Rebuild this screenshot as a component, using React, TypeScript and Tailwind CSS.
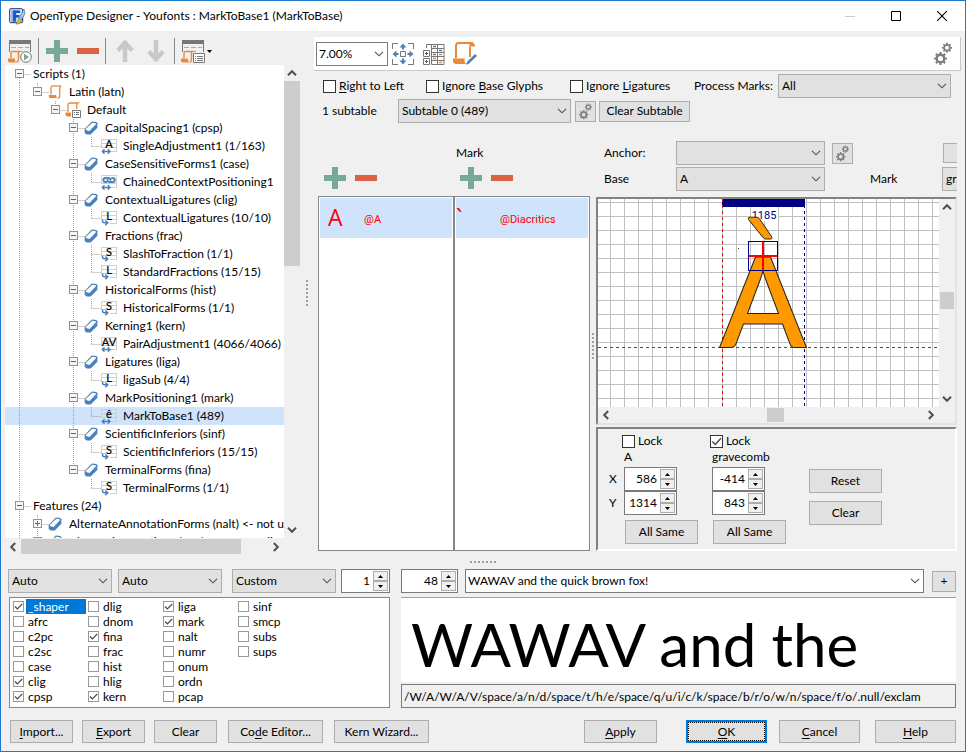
import type { ReactNode } from "react"
import clsx from "clsx"

type Lookup = "A" | "L" | "S" | "AV" | "ê" | "chain"
type IconName = "scroll" | "language" | "tag" | Lookup

interface TreeRow {
    text: string
    level: number
    icon?: IconName
    box?: "minus" | "plus"
    // columns whose dotted line runs through the whole row
    through: number[]
    last?: boolean
    selected?: boolean
}

const rows: TreeRow[] = [
    { text: "Scripts (1)", level: 0, box: "minus", through: [] },
    { text: "Latin (latn)", level: 1, box: "minus", icon: "scroll", through: [0], last: true },
    { text: "Default", level: 2, box: "minus", icon: "language", through: [0], last: true },
    { text: "CapitalSpacing1 (cpsp)", level: 3, box: "minus", icon: "tag", through: [0] },
    { text: "SingleAdjustment1 (1/163)", level: 4, icon: "A", through: [0, 3], last: true },
    { text: "CaseSensitiveForms1 (case)", level: 3, box: "minus", icon: "tag", through: [0] },
    { text: "ChainedContextPositioning1", level: 4, icon: "chain", through: [0, 3], last: true },
    { text: "ContextualLigatures (clig)", level: 3, box: "minus", icon: "tag", through: [0] },
    { text: "ContextualLigatures (10/10)", level: 4, icon: "L", through: [0, 3], last: true },
    { text: "Fractions (frac)", level: 3, box: "minus", icon: "tag", through: [0] },
    { text: "SlashToFraction (1/1)", level: 4, icon: "S", through: [0, 3] },
    { text: "StandardFractions (15/15)", level: 4, icon: "L", through: [0, 3], last: true },
    { text: "HistoricalForms (hist)", level: 3, box: "minus", icon: "tag", through: [0] },
    { text: "HistoricalForms (1/1)", level: 4, icon: "S", through: [0, 3], last: true },
    { text: "Kerning1 (kern)", level: 3, box: "minus", icon: "tag", through: [0] },
    { text: "PairAdjustment1 (4066/4066)", level: 4, icon: "AV", through: [0, 3], last: true },
    { text: "Ligatures (liga)", level: 3, box: "minus", icon: "tag", through: [0] },
    { text: "ligaSub (4/4)", level: 4, icon: "L", through: [0, 3], last: true },
    { text: "MarkPositioning1 (mark)", level: 3, box: "minus", icon: "tag", through: [0] },
    { text: "MarkToBase1 (489)", level: 4, icon: "ê", through: [0, 3], last: true, selected: true },
    { text: "ScientificInferiors (sinf)", level: 3, box: "minus", icon: "tag", through: [0] },
    { text: "ScientificInferiors (15/15)", level: 4, icon: "S", through: [0, 3], last: true },
    { text: "TerminalForms (fina)", level: 3, box: "minus", icon: "tag", through: [0], last: true },
    { text: "TerminalForms (1/1)", level: 4, icon: "S", through: [0], last: true },
    { text: "Features (24)", level: 0, box: "minus", through: [] },
    { text: "AlternateAnnotationForms (nalt) <- not used", level: 1, box: "plus", icon: "tag", through: [0] },
    { text: "AlternativeFractions (afrc) <- not usually", level: 1, box: "plus", icon: "tag", through: [0] },
]

const features = [
    ["_shaper", "afrc", "c2pc", "c2sc", "case", "clig", "cpsp"],
    ["dlig", "dnom", "fina", "frac", "hist", "hlig", "kern"],
    ["liga", "mark", "nalt", "numr", "onum", "ordn", "pcap"],
    ["sinf", "smcp", "subs", "sups"],
]
const enabled = ["_shaper", "clig", "cpsp", "fina", "kern", "liga", "mark"]

/* ---------- icons ---------- */

function Scroll({ className }: { className?: string }) {
    return (
        <svg viewBox="0 0 14 14" className={className} fill="none" stroke="#e8893c" strokeWidth="1.3">
            <path d="M3 9.5V2.8C3 1.4 4 .8 5 .8h8c-1 .5-1.3 1.2-1.3 2.2V11c0 1.300-.7 2-2 2" />
            <path d="M.8 10h7.500v1.200c0 1 .6 1.800 1.500 1.800H2.500C1.400 13 .8 12.200.8 11.200z" fill="#e8893c" stroke="none" />
        </svg>
    )
}

function TreeIcon({ name }: { name: IconName }) {
    if (name === "scroll") {
        return <Scroll className="size-[14px]" />
    }
    if (name === "language") {
        return (
            <svg viewBox="0 0 16 16" className="size-4" fill="none">
                <path d="M3 10V3c0-1.300.8-2 2-2h8c-.9.500-1.200 1.200-1.200 2.200V7" stroke="#e8893c" strokeWidth="1.300" />
                <path d="M.5 10.500h5.500v4H2.500c-1.200 0-2-1-2-2z" fill="#e8893c" />
                <path d="M7.500 8.500h8v7h-8z" fill="#fff" stroke="#777" />
                <path d="M9 10.500h1M11 10.500h3M9 12.500h1M11 12.500h3" stroke="#777" />
            </svg>
        )
    }
    if (name === "tag") {
        return (
            <svg viewBox="0 0 14 14" className="size-[14px]">
                <path d="M7.800.6l4.600.5 1 1.200v4.500L6.700 13.400l-4.200.2L.6 11.800V8z" fill="#4a80bb" />
                <path d="M8.300 1.700l3.600.5-.2 1.300-6.200 6.600-3.700-1.200.2-1.200z" fill="#fff" />
            </svg>
        )
    }
    const twoWay = name !== "L" && name !== "S"
    return (
        <svg viewBox="0 0 16 16" className="size-4">
            <path d="M.5 1v9M.5 1.500H15M.5 5.500H15M.5 9.500H15M9 13.500h6M15.500 1v13" stroke="#d0d0d0" fill="none" />
            {name === "chain" ? (
                <path
                    d="M6 8H4.200C1.800 8 1.800 3.800 4.200 3.800H7.500C9.500 3.800 10 5.500 9 6.500M10.300 3.800h1.500c2.600 0 2.600 4.200 0 4.200H8.500C6.500 8 6 6.500 7 5.300"
                    fill="none"
                    stroke="#4a80bb"
                    strokeWidth="1.800"
                />
            ) : (
                <text x="8" y="9.500" textAnchor="middle" fontSize="11" fill="#000" stroke="#000" strokeWidth=".2">
                    {name}
                </text>
            )}
            {twoWay ? (
                <path d="M1.500 13.500h7M3.500 11.300L1.300 13.500l2.200 2.200M6.800 11.300L9 13.500l-2.200 2.200" stroke="#4a80bb" strokeWidth="1.400" fill="none" />
            ) : (
                <path d="M1.500 9.500v1.200c0 1.300.7 2 2 2H6M4.300 10.500l2.500 2.300-2.500 2.500" stroke="#4a80bb" strokeWidth="1.500" fill="none" />
            )}
        </svg>
    )
}

function Gear({ cx, cy, r }: { cx: number; cy: number; r: number }) {
    return (
        <g transform={`translate(${cx} ${cy})`} stroke="#7d7d7d" fill="none">
            <circle r={r * 0.58} strokeWidth={r * 0.36} />
            {[0, 45, 90, 135, 180, 225, 270, 315].map((a) => (
                <path key={a} d={`M0 ${-r * 0.7}V${-r}`} strokeWidth={r * 0.34} transform={`rotate(${a})`} />
            ))}
        </g>
    )
}

function Gears({ className }: { className?: string }) {
    return (
        <svg viewBox="0 0 20 24" className={className}>
            <Gear cx={7.5} cy={16.5} r={6.5} />
            <Gear cx={14} cy={5.8} r={5} />
        </svg>
    )
}

function Plus() {
    return (
        <svg viewBox="0 0 22 22" className="size-[22px]">
            <path d="M8 0h6v8h8v6h-8v8H8v-8H0V8h8z" fill="#78a898" />
        </svg>
    )
}

function Minus() {
    return (
        <svg viewBox="0 0 22 22" className="size-[22px]">
            <path d="M0 8h22v6H0z" fill="#d96344" />
        </svg>
    )
}

function Arrow({ down }: { down?: boolean }) {
    return (
        <svg viewBox="0 0 18 24" className={clsx("h-6 w-[18px]", down && "rotate-180")}>
            <path d="M9 2v21M1.800 11.500L9 4l7.200 7.500" stroke="#c8c8c8" strokeWidth="4.500" fill="none" />
        </svg>
    )
}

function TableIcon({ run }: { run?: boolean }) {
    return (
        <svg viewBox="0 0 24 24" className="size-6" fill="none">
            <path d="M1 1h22v4H1z" fill="#777" />
            <path d="M1.500 5v8M22.500 5v8" stroke="#777" />
            <path d="M3 8.500h5M10 8.500h5M17 8.500h4M12 12.500h3" stroke="#aaa" />
            <path d="M3 19v-5c0-1 .6-1.500 1.500-1.500h7c-.7.500-1 1-1 2V20c0 2-1 3-2 3" stroke="#e8893c" strokeWidth="1.400" />
            <path d="M0 19.500h7V21c0 1.500.5 2 1.500 2.500H2c-1.300 0-2-1-2-2z" fill="#e8893c" />
            {run ? (
                <>
                    <circle cx="18" cy="18" r="5.300" fill="#fff" stroke="#777" />
                    <path d="M16 14.500l5 3.500-5 3.500z" fill="#78a898" />
                </>
            ) : (
                <>
                    <path d="M12.500 14.500h11v9h-11z" fill="#fff" stroke="#777" />
                    <path d="M14 17.500h1M16 17.500h6M14 19.500h1M16 19.500h6M14 21.500h1M16 21.500h6" stroke="#777" />
                </>
            )}
        </svg>
    )
}

function FitIcon() {
    return (
        <svg viewBox="0 0 22 22" className="size-[22px]" fill="none">
            <path d="M.5 6V.5H6M16 .5h5.500V6M21.500 16v5.500H16M6 21.500H.5V16" stroke="#777" />
            <path d="M8.500 8.500h5v5h-5z" stroke="#777" />
            <path d="M11 .5l3.500 4H12V6.500h-2V4.500H7.500zM11 21.500l3.500-4H12v-2h-2v2H7.500zM.5 11l4-3.500V10h2v2h-2v2.500zM21.500 11l-4-3.500V10h-2v2h2v2.500z" fill="#4a80bb" />
        </svg>
    )
}

function GridIcon() {
    return (
        <svg viewBox="0 0 22 22" className="size-[22px]" fill="none">
            <path d="M3.500 5V1.500H9M8.500 1.500h12.500v20H8.500zM14.500 1v20M8 5.500h13M8 9.500h13M8 13.500h13M8 17.500h13M.5 7.500h6v6h-6zM.5 15.500h6v6h-6z" stroke="#777" />
            <path d="M2 10.500h3M3.500 9v3M2 18.500h3M3.500 17v3" stroke="#555" />
            <path d="M10 3.500h3M16 7.500h3M10 11.500h3" stroke="#4a80bb" strokeWidth="1.500" />
            <path d="M16 11.500h3M10 15.500h3M16 19.500h3" stroke="#e8893c" strokeWidth="1.500" />
        </svg>
    )
}

function ScriptEditIcon() {
    return (
        <svg viewBox="0 0 24 23" className="h-[23px] w-6" fill="none">
            <path d="M3 16V4c0-2 1-3 2.500-3H20M17 5v10" stroke="#e8893c" strokeWidth="2" />
            <path d="M16 4.500C16 2 17.500.5 19 .5s3 1.500 3 4zM0 16.500h11.500V19c0 1.500 1 2.500 2.500 3H3c-2 0-3-1.500-3-3.500z" fill="#e8893c" />
            <path d="M22 12l2 2-8 7.500-3 1.500 1.200-3.300z" fill="#4a80bb" />
        </svg>
    )
}

function AppIcon() {
    return (
        <svg viewBox="0 0 17 17" className="size-[17px]">
            <rect x=".7" y=".7" width="13" height="14" rx="1" fill="#e4effb" stroke="#15306e" />
            <path d="M2 2h4.500v12H2z" fill="#8cc0f5" />
            <text x="3.500" y="12.500" fontSize="13" fontWeight="900" fill="#1a4fd0" stroke="#1a4fd0">F</text>
            <path d="M15 1l1 5-4 6-2.500 1 1-4z" fill="#9fc8ee" stroke="#31609c" strokeWidth=".6" />
            <path d="M10 10l3 2.500L10 16H7z" fill="#e5b73b" stroke="#7a5a10" strokeWidth=".5" />
        </svg>
    )
}

function Chevron({ className, bold }: { className?: string; bold?: boolean }) {
    return (
        <svg viewBox="0 0 10 6" className={clsx("h-[6px] w-[10px] shrink-0", className)}>
            <path d="M1 .8l4 4 4-4" fill="none" stroke="#505050" strokeWidth={bold ? 2 : 1.1} />
        </svg>
    )
}

/* ---------- controls ---------- */

// caption with its shortcut letter underlined
function Key({ text, at }: { text: string; at?: number }) {
    if (at === undefined) return <>{text}</>
    return (
        <>
            {text.slice(0, at)}
            <span className="underline underline-offset-2">{text[at]}</span>
            {text.slice(at + 1)}
        </>
    )
}

function Button({ text, at, className }: { text: string; at?: number; className?: string }) {
    return (
        <button type="button" className={clsx("shrink-0 border border-[#adadad] bg-[#e1e1e1] text-center whitespace-nowrap", className)}>
            <span>
                <Key text={text} at={at} />
            </span>
        </button>
    )
}

function Select({ label, value, className, white }: { label: string; value: string; className?: string; white?: boolean }) {
    return (
        <span className={clsx("relative flex h-6 items-center", className)}>
            <select
                aria-label={label}
                className={clsx(
                    "h-full w-full appearance-none border outline-none",
                    white ? "border-[#7a7a7a] bg-white pl-[2px]" : "border-[#adadad] bg-[#e1e1e1] pl-[3px]"
                )}
            >
                <option>{value}</option>
            </select>
            <Chevron className="pointer-events-none absolute right-1" />
        </span>
    )
}

function Check({ text, at, checked, small, highlight }: { text: string; at?: number; checked?: boolean; small?: boolean; highlight?: boolean }) {
    return (
        <label className={clsx("flex items-center whitespace-nowrap", small ? "h-[15px]" : "gap-[3px]")}>
            <span className="relative flex">
                <input
                    type="checkbox"
                    defaultChecked={checked}
                    className={clsx("peer appearance-none border bg-white", small ? "size-[11px] border-[#999]" : "size-[13px] border-[#333]")}
                />
                <svg viewBox="0 0 11 11" className="pointer-events-none absolute inset-0 hidden h-full w-full peer-checked:block">
                    <path d="M2 5.500l2.400 2.500L9.300 2.800" fill="none" stroke="#444" strokeWidth="1.200" />
                </svg>
            </span>
            <span className={clsx(small && "ml-[2px] flex h-full items-center pl-[2px]", highlight && "w-[60px] bg-[#0078d7] text-white")}>
                <Key text={text} at={at} />
            </span>
        </label>
    )
}

function Spinner({ label, value, className }: { label: string; value: string; className?: string }) {
    return (
        <span className={clsx("flex h-6 border border-[#7a7a7a] bg-white p-px", className)}>
            <input aria-label={label} defaultValue={value} className="w-0 min-w-0 flex-1 pr-[3px] text-right outline-none" />
            <span className="flex w-[15px] flex-col">
                <button type="button" aria-label={`${label} up`} className="flex flex-1 items-center justify-center border border-[#adadad] bg-[#f0f0f0]">
                    <svg viewBox="0 0 5 3" className="h-[3px] w-[5px]"><path d="M0 3L2.500 0 5 3z" /></svg>
                </button>
                <button type="button" aria-label={`${label} down`} className="flex flex-1 items-center justify-center border border-[#adadad] bg-[#f0f0f0]">
                    <svg viewBox="0 0 5 3" className="h-[3px] w-[5px]"><path d="M0 0L2.500 3 5 0z" /></svg>
                </button>
            </span>
        </span>
    )
}

function GearButton({ label }: { label: string }) {
    return (
        <button type="button" aria-label={label} className="flex size-[21px] shrink-0 items-center justify-center border border-[#adadad] bg-[#e1e1e1]">
            <Gears className="h-[17px] w-[15px]" />
        </button>
    )
}

function ScrollButton({ label, turn }: { label: string; turn: string }) {
    return (
        <button type="button" aria-label={label} className="flex size-4 shrink-0 items-center justify-center">
            <Chevron bold className={turn} />
        </button>
    )
}

function Grip({ vertical }: { vertical?: boolean }) {
    return (
        <div className={clsx("flex gap-[2px]", vertical && "flex-col")}>
            {[0, 1, 2, 3, 4, 5, 6].map((i) => (
                <i key={i} className="size-[2px] bg-[#a0a0a0]" />
            ))}
        </div>
    )
}

/* ---------- panels ---------- */

function TitleBar() {
    return (
        <header className="flex h-[30px] shrink-0 items-center bg-white pl-2">
            <AppIcon />
            <h1 className="ml-1 flex-1 whitespace-nowrap">OpenType Designer - Youfonts : MarkToBase1 (MarkToBase)</h1>
            <button type="button" aria-label="Minimize" className="flex w-[46px] justify-center">
                <svg viewBox="0 0 10 10" className="size-[10px]"><path d="M0 5.500h10" stroke="#ccc" /></svg>
            </button>
            <button type="button" aria-label="Maximize" className="flex w-[46px] justify-center">
                <svg viewBox="0 0 10 10" className="size-[10px]"><path d="M.5.500h9v9h-9z" fill="none" stroke="#000" /></svg>
            </button>
            <button type="button" aria-label="Close" className="flex w-[46px] justify-center">
                <svg viewBox="0 0 10 10" className="size-[10px]"><path d="M0 0l10 10M10 0L0 10" stroke="#000" strokeWidth="1.100" /></svg>
            </button>
        </header>
    )
}

function Guides({ row }: { row: TreeRow }) {
    const x = row.level * 18 + 9.5
    const width = row.level * 18 + 18
    const first = row.text.startsWith("Scripts")
    return (
        <svg width={width} height="18" viewBox={`0 0 ${width} 18`} className="shrink-0 overflow-visible" fill="none" stroke="#a0a0a0">
            {row.through.map((c) => (
                <path key={c} d={`M${c * 18 + 9.5} 0v18`} strokeDasharray="1 1" />
            ))}
            <path d={`M${x} ${first ? 9 : 0}V${row.last ? 9 : 18}M${x} 9.500h${row.level === 4 ? 9 : 11}`} strokeDasharray="1 1" />
            {row.box && (
                <>
                    <rect x={x - 4} y="4.500" width="8" height="8" fill="#f6f6f6" stroke="#919191" />
                    <path d={`M${x - 2.5} 8.500h5`} stroke="#4b63a7" />
                    {row.box === "plus" && <path d={`M${x} 6v5`} stroke="#4b63a7" />}
                </>
            )}
        </svg>
    )
}

function Tree() {
    return (
        <aside className="flex w-[299px] shrink-0 flex-col pt-[6px] pl-1">
            <div className="flex h-7 items-center gap-[6px] pl-[3px]">
                <button type="button" aria-label="Run"><TableIcon run /></button>
                <i className="h-[26px] w-px bg-[#8a8a8a]" />
                <button type="button" aria-label="Add" className="ml-px"><Plus /></button>
                <button type="button" aria-label="Remove" className="ml-[3px]"><Minus /></button>
                <i className="h-[26px] w-px bg-[#8a8a8a]" />
                <button type="button" aria-label="Move up" className="ml-[4px]"><Arrow /></button>
                <button type="button" aria-label="Move down" className="ml-[7px]"><Arrow down /></button>
                <i className="ml-[3px] h-[26px] w-px bg-[#8a8a8a]" />
                <button type="button" aria-label="View" className="flex items-center gap-[2px]">
                    <TableIcon />
                    <svg viewBox="0 0 5 3" className="h-[3px] w-[5px]"><path d="M0 0h5L2.500 3z" /></svg>
                </button>
            </div>
            <div className="flex min-h-0 flex-1">
                <ul className="min-w-0 flex-1 overflow-hidden bg-white">
                    {rows.map((row) => (
                        <li key={row.text} className={clsx("flex h-[18px] items-center pl-[5px] whitespace-nowrap", row.selected && "bg-[#cfe3fb]")}>
                            <Guides row={row} />
                            {row.icon && (
                                <span className="flex w-[18px] shrink-0 justify-center">
                                    <TreeIcon name={row.icon} />
                                </span>
                            )}
                            <span className="pl-[5px]">{row.text}</span>
                        </li>
                    ))}
                </ul>
                <div className="flex w-4 flex-col">
                    <ScrollButton label="Scroll up" turn="rotate-180" />
                    <div className="flex-1"><div className="h-[42%] bg-[#cdcdcd]" /></div>
                    <ScrollButton label="Scroll down" turn="" />
                </div>
            </div>
            <div className="flex h-[17px] items-center pr-4">
                <ScrollButton label="Scroll left" turn="rotate-90" />
                <div className="h-[15px] flex-1"><div className="h-full w-[89%] bg-[#cdcdcd]" /></div>
                <ScrollButton label="Scroll right" turn="-rotate-90" />
            </div>
        </aside>
    )
}

function GlyphList({ title, glyph, name }: { title: string; glyph: ReactNode; name: string }) {
    return (
        <section className="flex min-w-0 flex-1 flex-col">
            <h2 className="flex h-6 items-center pl-[2px]">{title}</h2>
            <div className="flex h-[31px] items-center gap-[9px] pb-[5px] pl-[6px]">
                <button type="button" aria-label="Add glyph"><Plus /></button>
                <button type="button" aria-label="Remove glyph"><Minus /></button>
            </div>
            <div className="flex-1 border border-[#828790] bg-white p-px">
                <div className="flex h-10 items-center bg-[#cfe3fb] pt-1 text-[#f00]">
                    {glyph}
                    <span className="font-[Roboto] text-[11px]">{name}</span>
                </div>
            </div>
        </section>
    )
}

function Canvas() {
    return (
        <div className="flex min-h-0 flex-1 flex-col border-2 border-t-[#828282] border-r-[#e3e3e3] border-b-[#e3e3e3] border-l-[#828282]">
            <div className="flex min-h-0 flex-1">
                <svg className="h-full min-w-0 flex-1 bg-white" role="img" aria-label="Glyph preview">
                    <defs>
                        <pattern id="grid" x="12" y="3" width="14" height="14" patternUnits="userSpaceOnUse">
                            <path d="M.5 0v14M0 .5h14" stroke="#c0c0c0" />
                        </pattern>
                    </defs>
                    <rect width="100%" height="100%" fill="url(#grid)" />
                    <rect x="153" y="9" width="27" height="13" fill="#fff" />
                    <rect x="124" y="0" width="83" height="8" fill="#000080" />
                    <path d="M124.500 0v208M0 148.500h342" stroke="#f00" strokeDasharray="3 3" />
                    <path d="M206.500 0v208" stroke="#000080" strokeDasharray="3 3" />
                    <text x="166" y="20" textAnchor="middle" fontSize="11" fill="#000080" className="font-[Roboto]">1185</text>
                    <g fill="#ff9900" stroke="#222" strokeLinejoin="round">
                        <text x="165" y="148" fontSize="126" textAnchor="middle" fontFamily="Lato" fontWeight="600">A</text>
                        {/* grave accent of the mark glyph */}
                        <path d="M150.500 20.500c-.8-1.300 0-2.300 1.500-2.300h6c2 0 3 .6 4 2.300l11.500 17c1 1.600.5 2.500-1.200 2.500h-3.500c-2 0-3-.5-4.200-2z" />
                    </g>
                    <rect x="150.500" y="42.500" width="29" height="29" fill="none" stroke="#000080" />
                    <path d="M165 43v28M151 57h28" stroke="#f00" strokeWidth="2" />
                    <path d="M140 49.500h1" stroke="#333" />
                </svg>
                <div className="flex w-4 flex-col items-center bg-[#f0f0f0]">
                    <ScrollButton label="Canvas up" turn="rotate-180" />
                    <div className="flex w-[14px] flex-1 flex-col justify-center pb-[6px]"><div className="h-[17px] bg-[#cdcdcd]" /></div>
                    <ScrollButton label="Canvas down" turn="" />
                </div>
            </div>
            <div className="flex h-4 items-center pr-4">
                <ScrollButton label="Canvas left" turn="rotate-90" />
                <div className="flex h-[14px] flex-1 justify-center pl-[14px]"><div className="w-[17px] bg-[#cdcdcd]" /></div>
                <ScrollButton label="Canvas right" turn="-rotate-90" />
            </div>
        </div>
    )
}

function LockColumn({ name, x, y, checked }: { name: string; x: string; y: string; checked?: boolean }) {
    return (
        <div className="w-[88px]">
            <Check text="Lock" checked={checked} />
            <p className="h-[18px] pl-[2px] leading-[15px]">{name}</p>
            <div className="flex flex-col pl-[2px]">
                <Spinner label={`${name} X`} value={x} className="w-[53px]" />
                <Spinner label={`${name} Y`} value={y} className="w-[53px]" />
                <Button text="All Same" className="mt-[5px] ml-px h-6 w-[73px]" />
            </div>
        </div>
    )
}

function Designer() {
    return (
        <main className="mr-1 flex min-w-0 flex-1 flex-col pt-[6px] pb-1">
            <div className="flex h-[34px] shrink-0 items-center border-r border-b border-[#c8c8c8] bg-white pr-[7px] pl-[2px]">
                <Select label="Zoom" value="7.00%" white className="w-[72px]" />
                <button type="button" aria-label="Fit" className="ml-1"><FitIcon /></button>
                <button type="button" aria-label="Table" className="ml-[9px]"><GridIcon /></button>
                <button type="button" aria-label="Edit script" className="ml-[8px]"><ScriptEditIcon /></button>
                <button type="button" aria-label="Options" className="ml-auto"><Gears className="h-[24px] w-5" /></button>
            </div>
            <div className="mt-[3px] flex h-6 items-center pr-[10px] pl-[9px]">
                <div className="w-[103px]"><Check text="Right to Left" at={0} /></div>
                <div className="w-[144px]"><Check text="Ignore Base Glyphs" at={7} /></div>
                <div className="w-[124px]"><Check text="Ignore Ligatures" at={7} /></div>
                <span className="w-[84px] whitespace-nowrap">Process Marks:</span>
                <Select label="Process Marks" value="All" className="flex-1" />
            </div>
            <div className="mt-px flex h-6 items-center pl-2">
                <span className="w-[76px]">1 subtable</span>
                <Select label="Subtable" value="Subtable 0 (489)" className="mr-1 w-[173px]" />
                <GearButton label="Subtable options" />
                <Button text="Clear Subtable" className="ml-[3px] h-[21px] w-[91px]" />
            </div>
            <div className="mt-[18px] flex min-h-0 flex-1 pr-1 pl-1">
                <div className="flex w-[272px] shrink-0">
                    <GlyphList
                        title=""
                        glyph={<span className="w-[44px] self-start pl-2 pt-1 font-['Open_Sans'] text-[23px] leading-none">A</span>}
                        name="@A"
                    />
                    <GlyphList
                        title="Mark"
                        glyph={<span className="w-[44px] self-start pt-1 font-['Open_Sans'] text-[23px] leading-none">`</span>}
                        name="@Diacritics"
                    />
                </div>
                <div className="flex w-[6px] shrink-0 items-center justify-center"><Grip vertical /></div>
                <div className="flex min-w-0 flex-1 flex-col">
                    <div className="flex h-[56px] flex-col gap-[2px] overflow-hidden pl-2">
                        <div className="flex shrink-0 items-center">
                            <span className="w-[72px] shrink-0">Anchor:</span>
                            <Select label="Anchor" value="" className="w-[149px] shrink-0" />
                            <span className="mr-[90px] ml-[7px]"><GearButton label="Anchor options" /></span>
                            <Button text="" className="h-5 w-[60px]" />
                        </div>
                        <div className="flex shrink-0 items-center">
                            <span className="w-[72px] shrink-0">Base</span>
                            <Select label="Base" value="A" className="w-[149px] shrink-0" />
                            <span className="ml-[45px] w-[72px] shrink-0">Mark</span>
                            <Select label="Mark" value="gravecomb" className="w-[149px] shrink-0" />
                        </div>
                    </div>
                    <Canvas />
                    <div className="mt-[2px] flex h-[124px] shrink-0 border-2 border-t-[#828282] border-r-white border-b-white border-l-[#828282] pt-[4px] pl-[11px]">
                        <div className="flex w-[13px] flex-col pt-[34px] leading-6">
                            <span>X</span>
                            <span>Y</span>
                        </div>
                        <LockColumn name="A" x="586" y="1314" />
                        <LockColumn name="gravecomb" x="-414" y="843" checked />
                        <div className="flex flex-col gap-2 pt-[36px] pl-[11px]">
                            <Button text="Reset" className="h-6 w-[73px]" />
                            <Button text="Clear" className="h-6 w-[73px]" />
                        </div>
                    </div>
                </div>
            </div>
        </main>
    )
}

function Preview() {
    return (
        <div className="flex pr-[9px] pl-[7px]">
            <div className="w-[382px] shrink-0">
                <div className="flex">
                    <Select label="Script" value="Auto" className="mr-[6px] w-[104px]" />
                    <Select label="Language" value="Auto" className="mr-[10px] w-[104px]" />
                    <Select label="Mode" value="Custom" className="mr-[5px] w-[104px]" />
                    <Spinner label="Index" value="1" className="flex-1" />
                </div>
                <div className="mt-1 ml-px flex h-[111px] border border-[#828790] bg-white pt-px pl-[3px]">
                    {features.map((column) => (
                        <div key={column[0]} className="w-[75px]">
                            {column.map((f) => (
                                <Check key={f} text={f} small checked={enabled.includes(f)} highlight={f === "_shaper"} />
                            ))}
                        </div>
                    ))}
                </div>
            </div>
            <div className="ml-[11px] min-w-0 flex-1">
                <div className="flex items-center">
                    <Spinner label="Size" value="48" className="mr-[7px] w-[57px]" />
                    <Select label="Sample text" value="WAWAV and the quick brown fox!" white className="mr-2 flex-1" />
                    <Button text="+" className="h-[21px] w-6" />
                </div>
                <div className="mt-1 flex h-[87px] items-center overflow-hidden border-t border-b-2 border-t-[#a0a0a0] border-b-[#f0f0f0] bg-white pt-2 pl-[10px] font-[Lato] text-[60px] leading-none whitespace-nowrap">
                    WAWAV and the
                </div>
                <input
                    aria-label="Glyph string"
                    readOnly
                    value="/W/A/W/A/V/space/a/n/d/space/t/h/e/space/q/u/i/c/k/space/b/r/o/w/n/space/f/o/.null/exclam"
                    className="block h-6 w-full border border-[#7a7a7a] bg-[#f0f0f0] px-[2px] outline-none"
                />
            </div>
        </div>
    )
}

export default function App() {
    return (
        <div className="flex h-screen flex-col overflow-hidden border border-[#1979ca] bg-[#f0f0f0] font-['Lato',sans-serif] text-[12px] leading-4 text-black">
            <TitleBar />
            <div className="flex min-h-0 flex-1">
                <Tree />
                <div className="flex w-[14px] shrink-0 items-center justify-center"><Grip vertical /></div>
                <Designer />
            </div>
            <div className="flex h-[14px] shrink-0 items-center justify-center"><Grip /></div>
            <Preview />
            <footer className="flex pt-[12px] pr-[9px] pb-2 pl-[9px]">
                <Button text="Import..." at={0} className="mr-[9px] h-[23px] w-[63px]" />
                <Button text="Export" at={0} className="mr-[9px] h-[23px] w-[63px]" />
                <Button text="Clear" className="mr-[11px] h-[23px] w-[63px]" />
                <Button text="Code Editor..." at={2} className="mr-[11px] h-[23px] w-[95px]" />
                <Button text="Kern Wizard..." className="mr-auto h-[23px] w-[95px]" />
                <Button text="Apply" at={0} className="mr-[29px] h-[23px] w-[73px]" />
                <button type="button" className="mr-3 h-[23px] w-[81px] border-2 border-[#0078d7] bg-[#e1e1e1]">
                    <span className="flex h-full items-center justify-center border border-dotted border-black">
                        <span><Key text="OK" at={0} /></span>
                    </span>
                </button>
                <Button text="Cancel" at={0} className="mr-[15px] h-[23px] w-[81px]" />
                <Button text="Help" at={0} className="h-[23px] w-[81px]" />
            </footer>
        </div>
    )
}
